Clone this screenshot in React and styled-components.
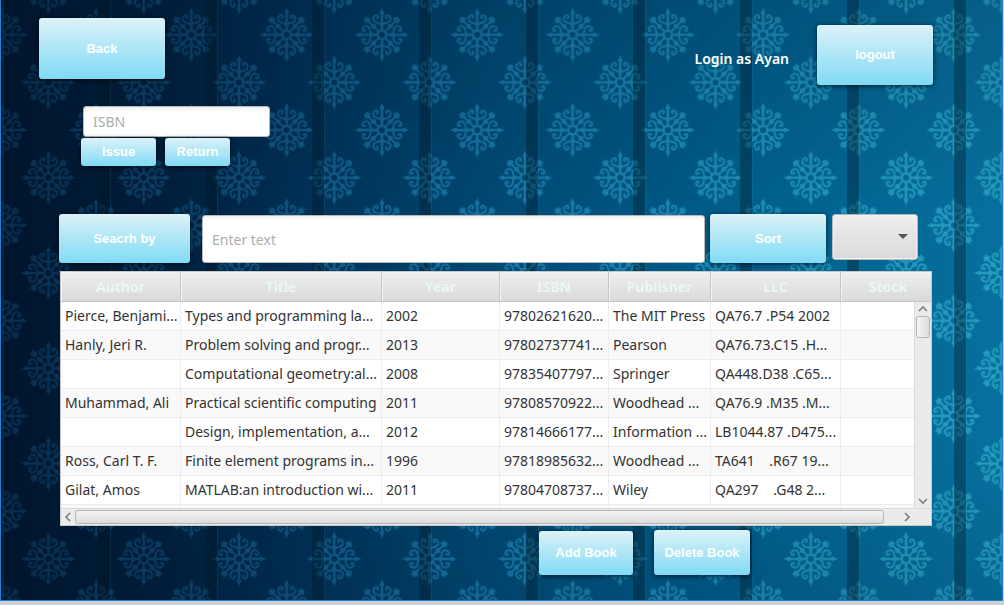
import React from "react";
import styled, { createGlobalStyle } from "styled-components";

const Global = createGlobalStyle`
  *, *::before, *::after { box-sizing: border-box; }
  html, body { margin: 0; padding: 0; }
  body { background: #cfcfd1; font-family: "Noto Sans", "Open Sans", sans-serif; }
  button, input, select { font: inherit; margin: 0; }
`;

const Desktop = styled.div`
  min-height: 100vh;
  padding: 0 1px 4px 0;
  display: flex;
`;

const Window = styled.main`
  position: relative;
  isolation: isolate;
  flex: 1;
  min-width: 0;
  border: 1px solid #1883d7;
  border-top: 0;
  padding: 18px 70px 25px 58px;
  overflow: hidden;
`;

const Wallpaper = styled.svg`
  position: absolute;
  inset: 0;
  width: 100%;
  height: 100%;
  z-index: -1;
`;

const GlossButton = styled.button`
  flex: none;
  width: ${(p) => p.$w}px;
  height: ${(p) => p.$h}px;
  padding: 0;
  border: 0;
  border-radius: 3px;
  background: linear-gradient(#dcf2f8, #80daf5);
  box-shadow: 0 1px 5px rgba(0, 0, 0, 0.7);
  color: #fff;
  font-family: "Liberation Sans", Arial, sans-serif;
  font-size: 13px;
  font-weight: bold;
  line-height: 20px;
  white-space: nowrap;
`;

const TopBar = styled.header`
  display: flex;
  align-items: flex-start;
  justify-content: space-between;
  margin: 0 -1px 0 -20px;
`;

const Session = styled.div`
  display: flex;
  align-items: center;
  gap: 28px;
  padding-top: 7px;
`;

const UserLabel = styled.span`
  padding-top: 7px;
  color: #fff;
  font-size: 14px;
  font-weight: 600;
  line-height: 20px;
`;

const LendingForm = styled.form`
  margin: 21px 0 0 22px;
`;

const LendingActions = styled.div`
  display: flex;
  gap: 9px;
  padding-top: 1px;
`;

const TextField = styled.input`
  display: block;
  width: 100%;
  min-width: 0;
  height: ${(p) => p.$h}px;
  padding: 0 9px;
  border: 1px solid #b9b9b9;
  border-radius: 3px;
  background: linear-gradient(#f0f0f0, #fff 5px);
  color: #333;
  font-size: 14px;
  &::placeholder { color: #adadad; opacity: 1; }
`;

const IsbnSlot = styled.div`
  width: 187px;
  margin-left: 2px;
`;

const SearchRow = styled.form`
  display: flex;
  align-items: flex-start;
  margin: 48px 14px 0 0;
`;

const QuerySlot = styled.div`
  flex: 1;
  min-width: 0;
  margin: 1px 5px 0 12px;
`;

const SortSlot = styled.div`
  position: relative;
  flex: none;
  margin-left: 6px;
`;

const SortSelect = styled.select`
  display: block;
  appearance: none;
  width: 86px;
  height: 46px;
  border: 1px solid #b5b5b5;
  border-radius: 3px;
  background: linear-gradient(#efefef, #d9d9d9);
  box-shadow: inset 0 0 0 1px #f2f2f2;
`;

const SelectArrow = styled.svg`
  position: absolute;
  right: 10px;
  top: 20px;
  pointer-events: none;
`;

const TableFrame = styled.section`
  position: relative;
  margin: 8px 0 0 1px;
  border: 1px solid #c8c8c8;
  background: #fff;
`;

const TableView = styled.div`
  height: 236px;
  overflow: hidden;
`;

const BookTable = styled.table`
  width: 100%;
  table-layout: fixed;
  border-collapse: separate;
  border-spacing: 0;
`;

const HeadCell = styled.th`
  height: 30px;
  padding: 0;
  border-right: 1px solid #c4c4c4;
  border-bottom: 1px solid #c4c4c4;
  background: linear-gradient(#efefef, #d9d9d9);
  box-shadow: inset 1px 1px 0 #f4f4f4;
  color: #eaf7f7;
  font-size: 14px;
  font-weight: 700;
  line-height: 20px;
  text-align: center;
  &:last-child { border-right: 0; padding-left: 4px; }
`;

const Row = styled.tr`
  background: #fff;
  &:nth-child(even) { background: #f9f9f9; }
`;

const Cell = styled.td`
  height: 29px;
  padding: 0 0 0 4px;
  border-right: 1px solid #ededed;
  border-bottom: 1px solid #ededed;
  color: #333;
  font-size: 14px;
  line-height: 20px;
  white-space: pre;
`;

const VerticalBar = styled.div`
  position: absolute;
  top: 30px;
  right: 0;
  bottom: 17px;
  width: 17px;
  display: flex;
  flex-direction: column;
  align-items: center;
  justify-content: space-between;
  border-left: 1px solid #dadada;
  background: #ebebeb;
`;

const HorizontalBar = styled.div`
  height: 17px;
  display: flex;
  align-items: center;
  padding: 0 17px 0 0;
  border-top: 1px solid #dadada;
  background: #ebebeb;
`;

const Step = styled.button`
  flex: none;
  width: 14px;
  height: 14px;
  padding: 0;
  border: 0;
  background: none;
  display: grid;
  place-items: center;
`;

const VerticalThumb = styled.div`
  width: 14px;
  height: 22px;
  border: 1px solid #b4b4b4;
  border-radius: 3px;
  background: linear-gradient(90deg, #f6f6f6, #dcdcdc);
`;

const HorizontalTrack = styled.div`
  flex: 1;
`;

const HorizontalThumb = styled.div`
  width: 98%;
  height: 14px;
  border: 1px solid #b4b4b4;
  border-radius: 3px;
  background: linear-gradient(#f6f6f6, #dcdcdc);
`;

const Actions = styled.footer`
  display: flex;
  align-items: center;
  justify-content: flex-end;
  gap: 21px;
  padding: 4px 182px 0 0;
`;

const Chevron = ({ turn }) => (
  <svg width="12" height="12" viewBox="0 0 12 12" fill="none" stroke="#7d7d7d" strokeWidth="1.6">
    <path d="M2 8 L6 4 L10 8" transform={`rotate(${turn} 6 6)`} />
  </svg>
);

const Flake = () => (
  <g id="flake">
    <circle r="4.3" fill="none" stroke="#fff" strokeWidth="2.4" />
    {[0, 90, 180, 270].map((a) => (
      <g key={a} transform={`rotate(${a})`}>
        <path d="M-1.2 -5 L-1.4 -9 L-2.6 -11 L-1.3 -13 L-1.3 -20 L-2.6 -22 L-1.2 -24 L0 -27.5 L1.2 -24 L2.6 -22 L1.3 -20 L1.3 -13 L2.6 -11 L1.4 -9 L1.2 -5 Z" fill="#fff" />
        <path
          d="M0 -10 C-3 -13 -8 -11 -8.6 -15 C-9 -19 -5 -21 -4 -18.4 C-3.7 -17 -5 -16.4 -5.6 -17 M0 -10 C3 -13 8 -11 8.6 -15 C9 -19 5 -21 4 -18.4 C3.7 -17 5 -16.4 5.6 -17"
          fill="none"
          stroke="#fff"
          strokeWidth="2"
        />
        <g transform="rotate(45)">
          <path d="M-1 -5 L-1 -9 L-3 -12 L-1 -14.5 L-1 -18 L-4 -20 L-2.6 -22 L-1.8 -24.5 L0 -22.8 L1.8 -24.5 L2.6 -22 L4 -20 L1 -18 L1 -14.5 L3 -12 L1 -9 L1 -5 Z" fill="#fff" />
        </g>
      </g>
    ))}
  </g>
);

const Damask = () => (
  <Wallpaper aria-hidden="true">
    <defs>
      <linearGradient id="cloth" x1="0" y1="0" x2="1" y2="0">
        <stop offset="0" stopColor="#00152c" />
        <stop offset="0.15" stopColor="#001d3a" />
        <stop offset="0.32" stopColor="#003258" />
        <stop offset="0.5" stopColor="#004a74" />
        <stop offset="0.75" stopColor="#005f8c" />
        <stop offset="1" stopColor="#07709e" />
      </linearGradient>
      <linearGradient id="thread" x1="0" y1="0" x2="1" y2="0">
        <stop offset="0" stopColor="#093254" />
        <stop offset="0.2" stopColor="#0f4a74" />
        <stop offset="0.45" stopColor="#1a78a8" />
        <stop offset="0.7" stopColor="#2193bb" />
        <stop offset="1" stopColor="#2ba6c6" />
      </linearGradient>
      <linearGradient id="shade" x1="0" y1="0" x2="0" y2="1">
        <stop offset="0" stopColor="#001830" stopOpacity="0.2" />
        <stop offset="0.35" stopColor="#001830" stopOpacity="0" />
        <stop offset="0.75" stopColor="#001830" stopOpacity="0" />
        <stop offset="1" stopColor="#001830" stopOpacity="0.12" />
      </linearGradient>
      <pattern id="flakes" patternUnits="userSpaceOnUse" x="-47.9" y="-12.9" width="95.3" height="95.3">
        <g transform="translate(47.65 47.65)">
          <Flake />
        </g>
        {[[0, 0], [95.3, 0], [0, 95.3], [95.3, 95.3]].map(([x, y]) => (
          <use key={`${x}-${y}`} href="#flake" x={x} y={y} />
        ))}
      </pattern>
      <pattern id="stripes" patternUnits="userSpaceOnUse" x="97" y="0" width="107" height="605">
        <rect x="0" width="12" height="605" fill="#001722" fillOpacity="0.36" />
        <rect x="12" width="1" height="605" fill="#3aa0c0" fillOpacity="0.14" />
      </pattern>
      <mask id="flakeMask">
        <rect width="100%" height="100%" fill="url(#flakes)" />
      </mask>
    </defs>
    <rect width="100%" height="100%" fill="url(#cloth)" />
    <rect width="100%" height="100%" fill="url(#thread)" mask="url(#flakeMask)" opacity="0.85" />
    <rect width="100%" height="100%" fill="url(#stripes)" />
    <rect width="100%" height="100%" fill="url(#shade)" />
  </Wallpaper>
);

const columns = [
  { name: "Author", width: 120 },
  { name: "Title" },
  { name: "Year", width: 118 },
  { name: "ISBN", width: 109 },
  { name: "Publisher", width: 102 },
  { name: "LLC", width: 130 },
  { name: "Stock", width: 90 },
];

const books = [
  ["Pierce, Benjami...", "Types and programming la...", "2002", "97802621620...", "The MIT Press", "QA76.7 .P54 2002"],
  ["Hanly, Jeri R.", "Problem solving and progr...", "2013", "97802737741...", "Pearson", "QA76.73.C15 .H..."],
  ["", "Computational geometry:al...", "2008", "97835407797...", "Springer", "QA448.D38 .C65..."],
  ["Muhammad, Ali", "Practical scientific computing", "2011", "97808570922...", "Woodhead ...", "QA76.9 .M35 .M..."],
  ["", "Design, implementation, a...", "2012", "97814666177...", "Information ...", "LB1044.87 .D475..."],
  ["Ross, Carl T. F.", "Finite element programs in...", "1996", "97818985632...", "Woodhead ...", "TA641    .R67 19..."],
  ["Gilat, Amos", "MATLAB:an introduction wi...", "2011", "97804708737...", "Wiley", "QA297    .G48 2..."],
  ["", "", "", "", "", ""],
];

export default function App() {
  return (
    <Desktop>
      <Global />
      <Window>
        <Damask />
        <TopBar>
          <GlossButton $w={126} $h={61}>Back</GlossButton>
          <Session>
            <UserLabel>Login as Ayan</UserLabel>
            <GlossButton $w={116} $h={60}>logout</GlossButton>
          </Session>
        </TopBar>

        <LendingForm onSubmit={(e) => e.preventDefault()}>
          <IsbnSlot>
            <TextField $h={31} placeholder="ISBN" aria-label="ISBN" />
          </IsbnSlot>
          <LendingActions>
            <GlossButton $w={75} $h={28}>Issue</GlossButton>
            <GlossButton $w={65} $h={28}>Return</GlossButton>
          </LendingActions>
        </LendingForm>

        <SearchRow onSubmit={(e) => e.preventDefault()}>
          <GlossButton $w={131} $h={49}>Seacrh by</GlossButton>
          <QuerySlot>
            <TextField $h={48} placeholder="Enter text" aria-label="Search text" />
          </QuerySlot>
          <GlossButton $w={116} $h={49}>Sort</GlossButton>
          <SortSlot>
            <SortSelect aria-label="Sort order" defaultValue="">
              <option value="" />
            </SortSelect>
            <SelectArrow width="10" height="6" viewBox="0 0 10 6" aria-hidden="true">
              <path d="M0 0 H10 L5 5 Z" fill="#555" />
            </SelectArrow>
          </SortSlot>
        </SearchRow>

        <TableFrame>
          <TableView>
            <BookTable>
              <colgroup>
                {columns.map((c) => (
                  <col key={c.name} width={c.width} />
                ))}
              </colgroup>
              <thead>
                <tr>
                  {columns.map((c) => (
                    <HeadCell key={c.name} scope="col">{c.name}</HeadCell>
                  ))}
                </tr>
              </thead>
              <tbody>
                {books.map((book, i) => (
                  <Row key={i}>
                    {book.map((value, j) => (
                      <Cell key={j}>{value}</Cell>
                    ))}
                    <Cell />
                  </Row>
                ))}
              </tbody>
            </BookTable>
          </TableView>
          <VerticalBar>
            <div>
              <Step aria-label="Scroll up"><Chevron turn={0} /></Step>
              <VerticalThumb />
            </div>
            <Step aria-label="Scroll down"><Chevron turn={180} /></Step>
          </VerticalBar>
          <HorizontalBar>
            <Step aria-label="Scroll left"><Chevron turn={270} /></Step>
            <HorizontalTrack><HorizontalThumb /></HorizontalTrack>
            <Step aria-label="Scroll right"><Chevron turn={90} /></Step>
          </HorizontalBar>
        </TableFrame>

        <Actions>
          <GlossButton $w={94} $h={44}>Add Book</GlossButton>
          <GlossButton $w={96} $h={45}>Delete Book</GlossButton>
        </Actions>
      </Window>
    </Desktop>
  );
}
